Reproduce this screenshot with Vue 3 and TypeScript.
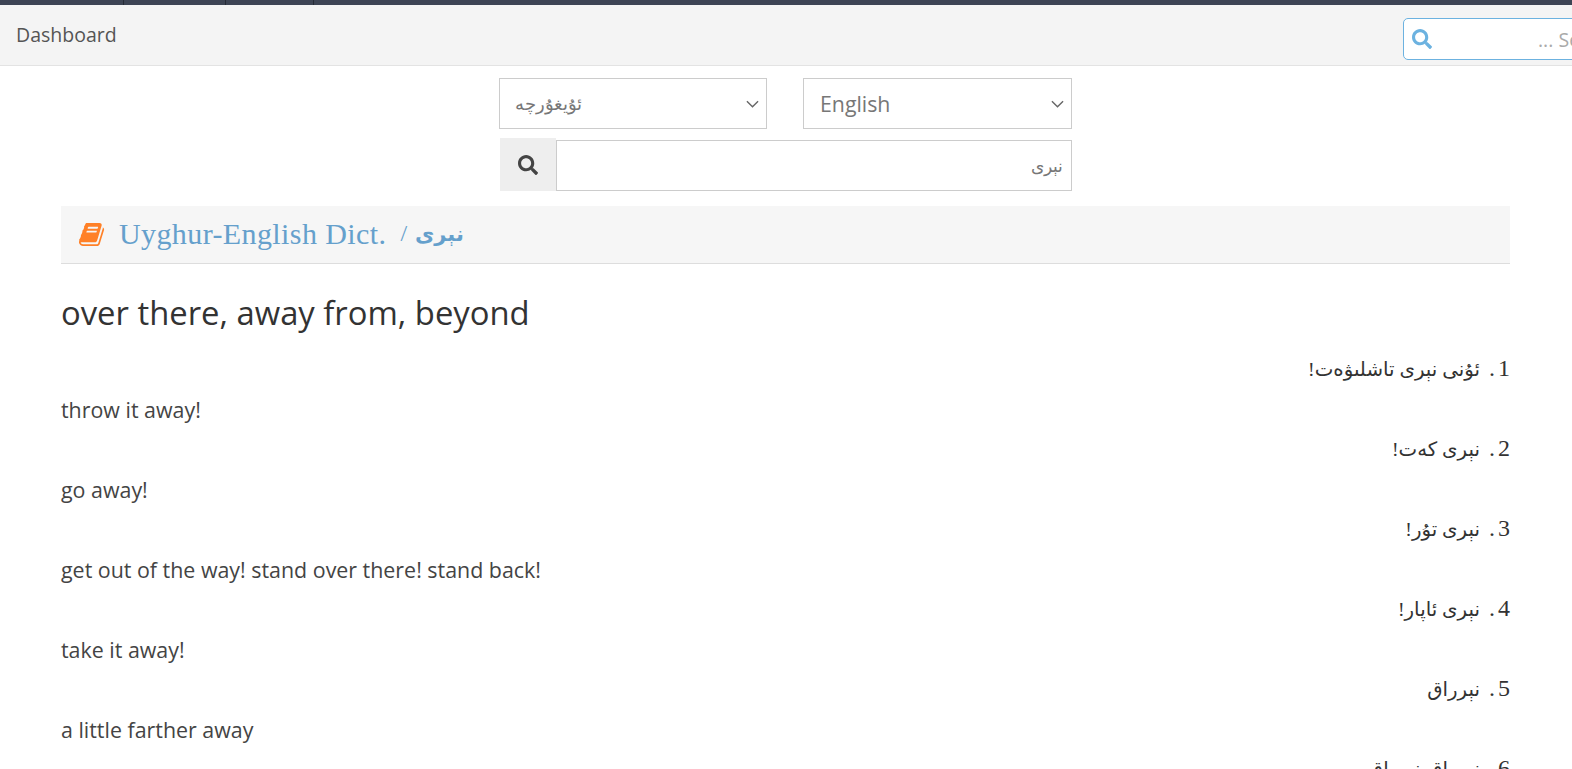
<script setup lang="ts">
const searchPath = 'M505 442.7L405.3 343c-4.5-4.5-10.6-7-17-7H372c27.6-35.3 44-79.7 44-128C416 93.1 322.9 0 208 0S0 93.1 0 208s93.1 208 208 208c48.3 0 92.7-16.4 128-44v16.3c0 6.4 2.5 12.5 7 17l99.7 99.7c9.4 9.4 24.6 9.4 33.9 0l28.3-28.3c9.4-9.4 9.4-24.6.1-34zM208 336c-70.7 0-128-57.2-128-128 0-70.7 57.2-128 128-128 70.7 0 128 57.2 128 128 0 70.7-57.2 128-128 128z'
const examples: { n: number; ug: string; en: string }[] = [
  { n: 1, ug: 'ئۇنى نېرى تاشلىۋەت!', en: 'throw it away!' },
  { n: 2, ug: 'نېرى كەت!', en: 'go away!' },
  { n: 3, ug: 'نېرى تۇر!', en: 'get out of the way! stand over there! stand back!' },
  { n: 4, ug: 'نېرى ئاپار!', en: 'take it away!' },
  { n: 5, ug: 'نېرراق', en: 'a little farther away' },
  { n: 6, ug: 'نېرراق-نېرراق', en: '' }
]
</script>

<template>
  <div class="page">
    <div class="topbar">
      <span class="tab tab-a"></span>
      <span class="tab tab-b"></span>
      <span class="tab tab-c"></span>
    </div>
    <nav class="nav">
      <a class="brand">Dashboard</a>
      <div class="nav-search">
        <svg class="nav-search-icon" viewBox="0 0 512 512"><path :d="searchPath" /></svg>
        <span class="placeholder">... Search</span>
      </div>
    </nav>

    <section class="picker">
      <div class="selects">
        <div class="select-box">
          <span class="select-value ug">ئۇيغۇرچە</span>
          <svg class="chevron" viewBox="0 0 14 8"><path d="M1 1l6 6 6-6" /></svg>
        </div>
        <div class="select-box">
          <span class="select-value">English</span>
          <svg class="chevron" viewBox="0 0 14 8"><path d="M1 1l6 6 6-6" /></svg>
        </div>
      </div>
      <div class="search-row">
        <div class="addon">
          <svg class="addon-icon" viewBox="0 0 512 512"><path :d="searchPath" /></svg>
        </div>
        <div class="search-input ug" dir="rtl">نېرى</div>
      </div>
    </section>

    <main class="content">
      <div class="crumb">
        <svg class="book" viewBox="0 0 1792 1792"><path d="M1639 478q40 57 18 129l-275 906q-19 64-76.5 107.5t-122.5 43.5h-923q-77 0-148.5-53.5t-99.5-131.5q-24-67-2-127 0-4 3-27t4-37q1-8-3-21.5t-3-19.5q2-11 8-21t16.5-23.5 16.5-23.5q23-38 45-91.5t30-91.5q3-10 .5-30t-.5-28q3-11 17-28t17-23q21-36 42-92t25-90q1-9-2.5-32t.5-28q4-13 22-30.5t22-22.5q19-26 42.5-84.5t27.5-96.5q1-8-3-25.5t-2-26.5q2-8 9-18t18-23 17-21q8-12 16.5-30.5t15-35 16-36 19.5-32 26.5-23.5 36-11.5 47.5 5.5l-1 3q38-9 51-9h761q74 0 114 56t18 130l-274 906q-36 119-71.5 153.5t-128.5 34.5h-869q-27 0-38 15-11 16-1 43 24 70 144 70h923q29 0 56-15.5t35-41.5l300-987q7-22 5-57 38 15 59 43zm-1064 2q-4 13 2 22.5t20 9.5h608q13 0 25.5-9.5t16.5-22.5l21-64q4-13-2-22.5t-20-9.5h-608q-13 0-25.5 9.5t-16.5 22.5zm-83 256q-4 13 2 22.5t20 9.5h608q13 0 25.5-9.5t16.5-22.5l21-64q4-13-2-22.5t-20-9.5h-608q-13 0-25.5 9.5t-16.5 22.5z" /></svg>
        <span class="crumb-title">Uyghur-English Dict.</span>
        <span class="crumb-sep">/</span>
        <span class="crumb-word">نېرى</span>
      </div>

      <h2 class="headword">over there, away from, beyond</h2>

      <div v-for="ex in examples" :key="ex.n" class="example">
        <p class="ex-ug" dir="rtl"><span class="ex-num">{{ ex.n }} .</span><span class="ex-text">{{ ex.ug }}</span></p>
        <p class="ex-en">{{ ex.en }}</p>
      </div>
    </main>
  </div>
</template>

<style>
html, body {
  margin: 0;
  overflow: hidden;
  background: #fff;
}
</style>

<style scoped>
.page {
  width: 1572px;
  height: 769px;
  overflow: hidden;
  font-family: "Open Sans", sans-serif;
  color: #333;
}
.topbar {
  height: 5px;
  background: #3d4454;
  display: flex;
}
.tab {
  border-right: 1px solid #262b36;
}
.tab-a { width: 123px; }
.tab-b { width: 101px; }
.tab-c { width: 87px; }
.nav {
  height: 60px;
  box-sizing: content-box;
  background: #f4f4f4;
  border-bottom: 1px solid #e3e3e3;
  display: flex;
  align-items: center;
  justify-content: space-between;
  overflow: hidden;
}
.brand {
  margin: 0 0 2px 16px;
  font-size: 19.5px;
  color: #555;
}
.nav-search {
  flex: none;
  width: 260px;
  height: 42px;
  margin: 8px -91px 0 0;
  box-sizing: border-box;
  background: #fff;
  border: 1px solid #6cb2e0;
  border-radius: 5px;
  display: flex;
  align-items: center;
  position: relative;
}
.nav-search-icon {
  width: 20px;
  height: 20px;
  margin-left: 8px;
  fill: #6cb2e0;
}
.placeholder {
  position: absolute;
  left: 134px;
  font-size: 19.5px;
  color: #aaa;
  white-space: nowrap;
}
.picker {
  width: 573px;
  margin: 12px 0 0 499px;
}
.selects {
  display: grid;
  grid-template-columns: 268px 269px;
  column-gap: 36px;
}
.select-box {
  height: 51px;
  box-sizing: border-box;
  border: 1px solid #ccc;
  display: flex;
  align-items: center;
  padding-left: 16px;
  position: relative;
  color: #777;
  font-size: 21.3px;
}
.select-value.ug {
  font-size: 18.4px;
  margin: 0 0 2px -1px;
}
.chevron {
  position: absolute;
  right: 7px;
  top: 21px;
  width: 13px;
  height: 8px;
  fill: none;
  stroke: #666;
  stroke-width: 1.5;
}
.search-row {
  display: flex;
  margin-top: 9px;
  padding-left: 1px;
}
.addon {
  width: 56px;
  height: 53px;
  background: #eee;
  display: flex;
  align-items: center;
  justify-content: center;
}
.addon-icon {
  width: 20px;
  height: 20px;
  fill: #444;
}
.search-input {
  flex: 1;
  height: 51px;
  margin-top: 2px;
  box-sizing: border-box;
  border: 1px solid #ccc;
  padding-right: 8px;
  display: flex;
  align-items: center;
  font-size: 17px;
  color: #777;
}
.content {
  margin: 15px 62px 0 61px;
}
.crumb {
  height: 58px;
  box-sizing: border-box;
  background: #f6f6f6;
  border-bottom: 1px solid #ddd;
  display: flex;
  align-items: center;
  padding-left: 18px;
  color: #65a0cc;
}
.book {
  width: 27px;
  height: 27px;
  fill: #ff8027;
  margin-right: 13px;
}
.crumb-title {
  font-family: "Liberation Serif", serif;
  font-size: 30px;
  letter-spacing: 0.4px;
  margin-bottom: 2px;
}
.crumb-sep {
  font-family: "Liberation Serif", serif;
  font-size: 24px;
  margin: 0 8px 2px 14px;
}
.crumb-word {
  font-family: "Liberation Serif", "DejaVu Sans", serif;
  font-size: 21px;
  font-weight: 700;
}
.headword {
  margin: 29px 0 15px;
  font-size: 32.8px;
  line-height: 40px;
  font-weight: 400;
  color: #333;
}
.example {
  height: 80px;
}
.ex-ug {
  margin: 0;
  font-family: "Liberation Serif", "DejaVu Sans", serif;
  font-size: 24px;
  line-height: 40px;
  color: #333;
}
.ex-num {
  word-spacing: -3px;
  margin-left: 9px;
}
.ex-text {
  font-size: 19.8px;
}
.ex-en {
  margin: 1px 0 0;
  font-size: 21.4px;
  line-height: 40px;
  color: #444;
}
</style>
